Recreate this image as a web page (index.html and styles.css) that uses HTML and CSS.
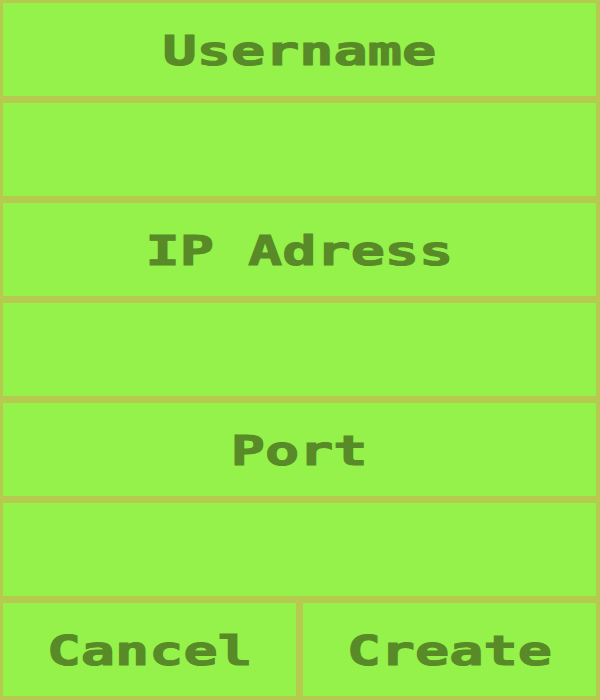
FILE: index.html
```html
<!DOCTYPE html>
<html>
<head>
<meta charset="utf-8">
<link rel="stylesheet" href="styles.css">
</head>
<body>
<form class="form">
  <div class="cell"><span class="label">Username</span></div>
  <div class="cell"></div>
  <div class="cell"><span class="label">IP Adress</span></div>
  <div class="cell"></div>
  <div class="cell"><span class="label">Port</span></div>
  <div class="cell"></div>
  <div class="actions">
    <div class="cell"><span class="label">Cancel</span></div>
    <div class="cell"><span class="label">Create</span></div>
  </div>
</form>
</body>
</html>
```

FILE: styles.css
```css
html, body {
  margin: 0;
  padding: 0;
  background: #94f24b;
}
.form {
  width: 600px;
  height: 700px;
  display: flex;
  flex-direction: column;
}
.cell {
  box-sizing: border-box;
  height: 100px;
  border-style: solid;
  border-color: #b6ca4f;
  border-width: 3px 4px 4px 3px;
  background: #94f24b;
  display: flex;
  align-items: center;
  justify-content: center;
}
.actions {
  display: flex;
}
.actions .cell {
  flex: 1;
}
.label {
  display: inline-block;
  font-family: "DejaVu Sans Mono", "Liberation Mono", monospace;
  font-weight: bold;
  font-size: 40px;
  line-height: 1;
  color: #588a28;
  -webkit-text-stroke: 1px #588a28;
  white-space: pre;
  transform: scaleX(1.42);
  padding-top: 2px;
}
```
